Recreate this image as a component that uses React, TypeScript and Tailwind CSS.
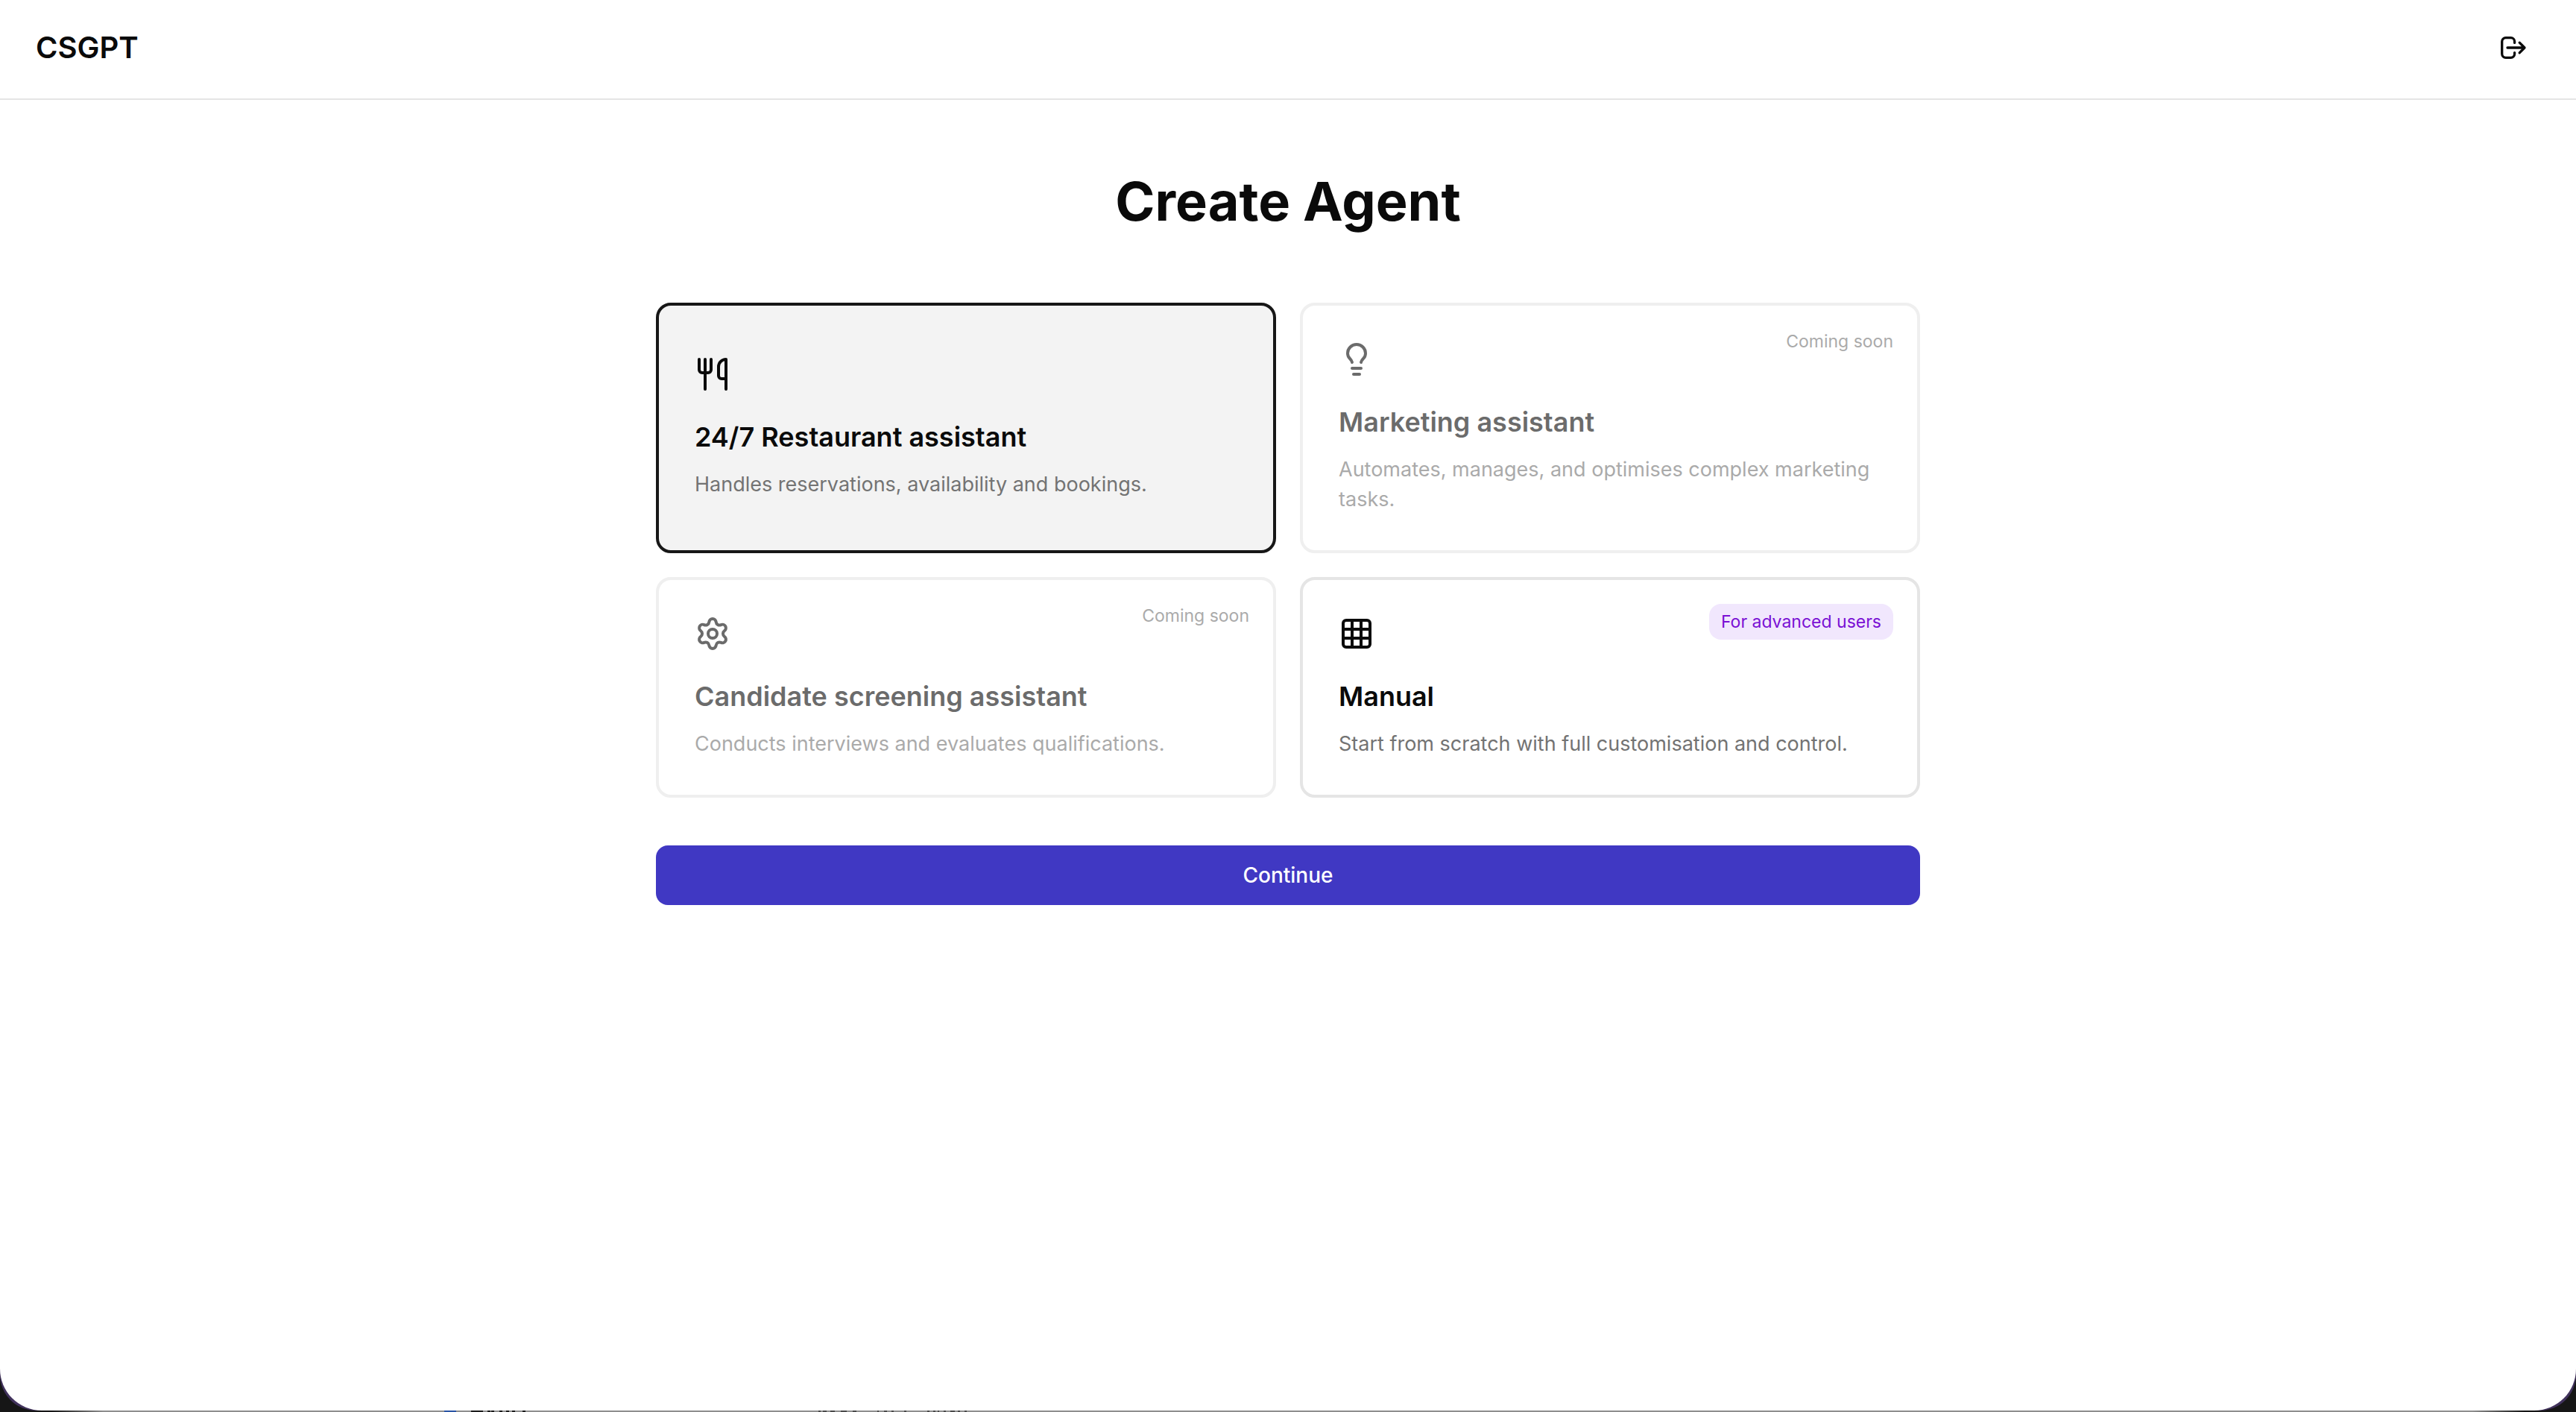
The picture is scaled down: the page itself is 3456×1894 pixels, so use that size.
import React, { useState } from "react";
import { Grid3x3, Lightbulb, Settings, Utensils } from "lucide-react";
import type { LucideIcon } from "lucide-react";
import clsx from "clsx";

type Template = {
  id: string;
  title: string;
  description: string;
  icon: LucideIcon;
  comingSoon?: boolean;
  advanced?: boolean;
};

const templates: Template[] = [
  {
    id: "restaurant",
    title: "24/7 Restaurant assistant",
    description: "Handles reservations, availability and bookings.",
    icon: Utensils,
  },
  {
    id: "marketing",
    title: "Marketing assistant",
    description: "Automates, manages, and optimises complex marketing tasks.",
    icon: Lightbulb,
    comingSoon: true,
  },
  {
    id: "screening",
    title: "Candidate screening assistant",
    description: "Conducts interviews and evaluates qualifications.",
    icon: Settings,
    comingSoon: true,
  },
  {
    id: "manual",
    title: "Manual",
    description: "Start from scratch with full customisation and control.",
    icon: Grid3x3,
    advanced: true,
  },
];

const LogoutIcon: React.FC = () => (
  <svg
    className="size-10"
    viewBox="0 0 40 40"
    fill="none"
    stroke="currentColor"
    strokeWidth="3.3"
    strokeLinecap="round"
    strokeLinejoin="round"
    aria-hidden="true"
  >
    <path d="M21.6 13.4v-1.7a5 5 0 0 0-5-5h-6.9a5 5 0 0 0-5 5v16.6a5 5 0 0 0 5 5h6.9a5 5 0 0 0 5-5v-1.7" />
    <path d="M12 20h22.6M28.2 13.2 35 20l-6.8 6.8" />
  </svg>
);

const Header: React.FC = () => (
  <header className="flex h-[134px] items-center justify-between border-b-2 border-[#e5e5e5] px-12 pb-1">
    <div className="text-[40px] leading-14 font-semibold">CSGPT</div>
    <button type="button" aria-label="Log out" className="rounded-2xl p-4">
      <LogoutIcon />
    </button>
  </header>
);

type CardProps = {
  template: Template;
  selected: boolean;
  onSelect: () => void;
};

const TemplateCard: React.FC<CardProps> = ({ template, selected, onSelect }) => {
  const { title, description, icon: Icon, comingSoon, advanced } = template;

  return (
    <button
      type="button"
      disabled={comingSoon}
      aria-pressed={selected}
      onClick={onSelect}
      className={clsx(
        "relative flex flex-col justify-center rounded-[20px] border-4 p-12 text-left",
        selected ? "border-[#171717] bg-[#f3f3f3]" : "border-[#e5e5e5] bg-white",
        comingSoon && "opacity-60"
      )}
    >
      {comingSoon && (
        <span className="absolute top-8 right-8 text-[23px] leading-8 text-[#737373]">
          Coming soon
        </span>
      )}
      {advanced && (
        <span className="absolute top-8 right-8 rounded-2xl bg-[#f1e7fd] px-4 py-2 text-[23px] leading-8 text-[#7a10d4]">
          For advanced users
        </span>
      )}
      <Icon className="size-12" />
      <span className="mt-8 text-[36px] leading-14 font-semibold">{title}</span>
      <span className="mt-4 text-[27px] leading-10 text-[#737373]">
        {description}
      </span>
    </button>
  );
};

// Sliver of the window behind, showing under the bottom edge
const WindowBehind: React.FC = () => (
  <div className="h-0.5 bg-linear-to-r from-[#161616] from-2% via-[#8e8e8e] via-4% to-[#8e8e8e]">
    <div className="h-full bg-linear-to-l from-[#161616] from-2% to-transparent to-4%">
      <svg width="1300" height="2" aria-hidden="true">
        <rect x="596" width="16" height="2" fill="#2a55a5" />
        <path
          d="M632 1h16M654 1h4M659 1h4M670 1h4M679 1h4M687 1h4M701 1h4"
          stroke="#1c1c1c"
          strokeWidth="2"
        />
        <path
          d="M1098 1h3M1104 1h5M1114 1h6M1128 1h8M1144 1h5M1177 1h2M1186 1h4M1196 1h3M1213 1h3M1244 1h3M1252 1h3M1258 1h2M1266 1h3M1275 1h6M1285 1h3M1294 1h3"
          stroke="#4a4a4a"
          strokeWidth="2"
        />
      </svg>
    </div>
  </div>
);

const App: React.FC = () => {
  const [selectedId, setSelectedId] = useState("restaurant");

  return (
    <div className="flex min-h-screen flex-col bg-[#161616] font-['Inter',sans-serif] text-[#0a0a0a]">
      <div className="flex flex-1 flex-col rounded-b-[48px] bg-[#41325c]">
        <div className="flex-1 rounded-b-[56px] bg-white">
          <Header />

          <main className="mx-auto max-w-[1792px] px-12 py-24">
            <h1 className="mb-24 text-center text-[72px] leading-20 font-bold">
              Create Agent
            </h1>

            <div className="grid grid-cols-2 gap-8">
              {templates.map((template) => (
                <TemplateCard
                  key={template.id}
                  template={template}
                  selected={template.id === selectedId}
                  onSelect={() => setSelectedId(template.id)}
                />
              ))}
            </div>

            <button
              type="button"
              className="mt-16 h-20 w-full rounded-2xl bg-[#4038c3] text-[28px] leading-10 font-medium text-white"
            >
              Continue
            </button>
          </main>
        </div>
      </div>
      <WindowBehind />
    </div>
  );
};

export default App;
